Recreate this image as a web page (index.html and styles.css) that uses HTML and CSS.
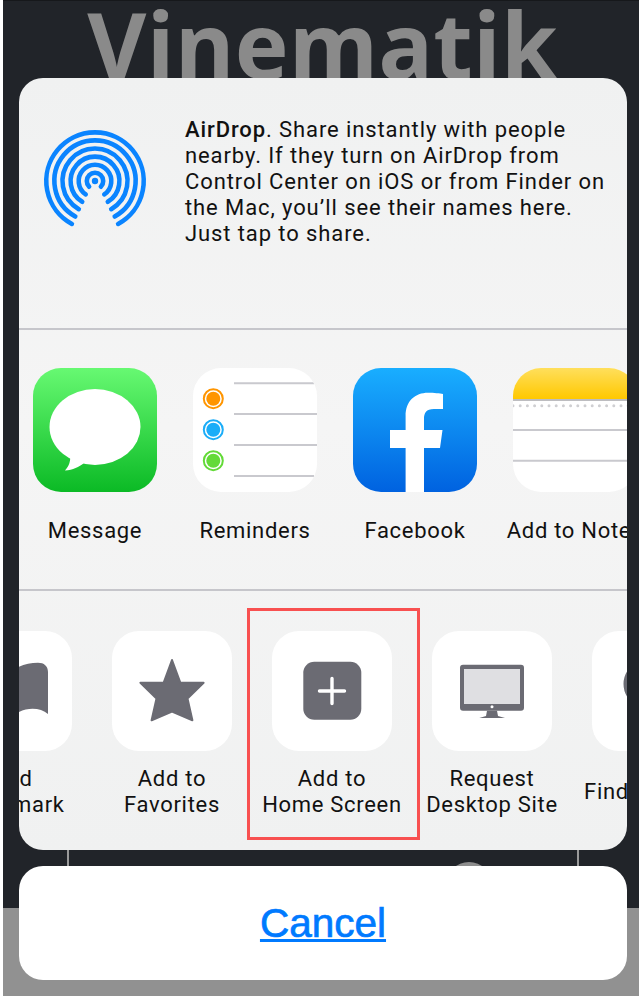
FILE: index.html
```html
<!DOCTYPE html>
<html lang="en">
<head>
    <meta charset="UTF-8">
    <meta name="viewport" content="width=device-width, initial-scale=1.0">
    <title>Share sheet</title>
    <link rel="stylesheet" href="styles.css">
</head>
<body>

<div class="page">
    <div class="backdrop">
        <h1 class="brand">Vinematik</h1>
        <div class="player">
            <span class="knob"></span>
        </div>
    </div>
    <div class="footer"></div>

    <div class="sheet">
        <section class="airdrop">
            <svg class="airdrop-icon" viewBox="-55 -55 110 110" width="110" height="110">
                <g fill="none" stroke="#0a84ff" stroke-width="4.6" stroke-linecap="round">
                    <path d="M-5.9 5.7A8.2 8.2 0 1 1 5.9 5.7"/>
                    <path d="M-9.3 13.4A16.3 16.3 0 1 1 9.3 13.4"/>
                    <path d="M-12.8 20.8A24.4 24.4 0 1 1 12.8 20.8"/>
                    <path d="M-16.2 28.2A32.5 32.5 0 1 1 16.2 28.2"/>
                    <path d="M-19.7 35.5A40.6 40.6 0 1 1 19.7 35.5"/>
                    <path d="M-23.1 42.9A48.7 48.7 0 1 1 23.1 42.9"/>
                </g>
                <circle r="3.2" fill="#0a84ff"/>
            </svg>
            <p class="airdrop-text"><b>AirDrop</b>. Share instantly with people<br>nearby. If they turn on AirDrop from<br>Control Center on iOS or from Finder on<br>the Mac, you’ll see their names here.<br>Just tap to share.</p>
        </section>

        <section class="row row-apps">
            <div class="item">
                <svg class="tile" viewBox="0 0 124 124">
                    <defs>
                        <linearGradient id="msgBg" x1="0" y1="0" x2="0" y2="1">
                            <stop offset="0" stop-color="#67f972"/>
                            <stop offset="1" stop-color="#0bba25"/>
                        </linearGradient>
                    </defs>
                    <rect width="124" height="124" fill="url(#msgBg)"/>
                    <ellipse cx="62" cy="59" rx="45.5" ry="38" fill="#fff"/>
                    <path d="M37 86C38 93 36 98 32 102.5C40 102 46 99 51 95Z" fill="#fff"/>
                </svg>
                <span class="label">Message</span>
            </div>
            <div class="item">
                <svg class="tile" viewBox="0 0 124 124">
                    <rect width="124" height="124" fill="#fff"/>
                    <g stroke="#c9c9ce" stroke-width="2">
                        <path d="M41 15.3H121"/>
                        <path d="M41 46H124"/>
                        <path d="M41 77H124"/>
                        <path d="M41 108H121"/>
                    </g>
                    <g fill="none" stroke-width="2">
                        <circle cx="20.3" cy="30.7" r="9.5" stroke="#ff9500"/>
                        <circle cx="20.3" cy="61.7" r="9.5" stroke="#1badf8"/>
                        <circle cx="20.3" cy="92.7" r="9.5" stroke="#63da38"/>
                    </g>
                    <circle cx="20.3" cy="30.7" r="7" fill="#ff9500"/>
                    <circle cx="20.3" cy="61.7" r="7" fill="#1badf8"/>
                    <circle cx="20.3" cy="92.7" r="7" fill="#63da38"/>
                </svg>
                <span class="label">Reminders</span>
            </div>
            <div class="item">
                <svg class="tile" viewBox="0 0 124 124">
                    <defs>
                        <linearGradient id="fbBg" x1="0" y1="0" x2="0" y2="1">
                            <stop offset="0" stop-color="#19aeff"/>
                            <stop offset="1" stop-color="#0062e0"/>
                        </linearGradient>
                    </defs>
                    <rect width="124" height="124" fill="url(#fbBg)"/>
                    <path d="M52.6 124V80H37V62H52.6V48C52.6 33 62 24.7 75 24.7C81 24.7 87 25.3 90 26V41H81C73 41 71 45 71 51V62H89.5L87 80H71V124Z" fill="#fff"/>
                </svg>
                <span class="label">Facebook</span>
            </div>
            <div class="item">
                <svg class="tile" viewBox="0 0 124 124">
                    <defs>
                        <linearGradient id="noteBg" x1="0" y1="0" x2="0" y2="1">
                            <stop offset="0" stop-color="#ffdf5c"/>
                            <stop offset="1" stop-color="#ffc800"/>
                        </linearGradient>
                    </defs>
                    <rect width="124" height="124" fill="#fff"/>
                    <rect width="124" height="31" fill="url(#noteBg)"/>
                    <rect y="31" width="124" height="2" fill="#bdbdc0"/>
                    <path d="M0 37.7H124" stroke="#cfcfd2" stroke-width="3" stroke-linecap="round" stroke-dasharray="0 7.2"/>
                    <g stroke="#c9c9ce" stroke-width="2">
                        <path d="M0 62H124"/>
                        <path d="M0 92.7H124"/>
                    </g>
                </svg>
                <span class="label">Add to Notes</span>
            </div>
        </section>

        <section class="row row-actions">
            <div class="item">
                <svg class="tile tile-small" viewBox="0 0 120 120">
                    <rect width="120" height="120" fill="#fff"/>
                    <path d="M60 40C66 35 76 31.7 86 31.7C92 31.7 96 35 96 41V83C87 75 70 76 60 86C50 76 33 75 24 83V41C24 35 28 31.7 34 31.7C44 31.7 54 35 60 40Z" fill="#6b6b73"/>
                </svg>
                <span class="label label-action">Add<br>Bookmark</span>
            </div>
            <div class="item">
                <svg class="tile tile-small" viewBox="0 0 120 120">
                    <rect width="120" height="120" fill="#fff"/>
                    <path d="M60 29L68.3 51.7H91.6L75.5 67.5L80.4 89.3L60 80.7L39.6 89.3L44.5 67.5L28.4 51.7H51.7Z" fill="#6b6b73" stroke="#6b6b73" stroke-width="2" stroke-linejoin="round"/>
                </svg>
                <span class="label label-action">Add to<br>Favorites</span>
            </div>
            <div class="item">
                <svg class="tile tile-small" viewBox="0 0 120 120">
                    <rect width="120" height="120" fill="#fff"/>
                    <rect x="31.3" y="30.7" width="58" height="58" rx="11" fill="#6b6b73"/>
                    <path d="M60 47.5V72.5M47.5 60H72.5" stroke="#fff" stroke-width="3.4" stroke-linecap="round"/>
                </svg>
                <span class="label label-action">Add to<br>Home Screen</span>
            </div>
            <div class="item">
                <svg class="tile tile-small" viewBox="0 0 120 120">
                    <rect width="120" height="120" fill="#fff"/>
                    <rect x="28" y="33.7" width="64" height="46" rx="3" fill="#6b6b73"/>
                    <rect x="32" y="38" width="56" height="35" fill="#dfdfe2"/>
                    <circle cx="60" cy="75.8" r="1.5" fill="#fff"/>
                    <path d="M55 79.7H65L66 85L73 87H47.3L54 85Z" fill="#6b6b73"/>
                </svg>
                <span class="label label-action">Request<br>Desktop Site</span>
            </div>
            <div class="item">
                <svg class="tile tile-small" viewBox="0 0 120 120">
                    <rect width="120" height="120" fill="#fff"/>
                    <circle cx="55" cy="53" r="21" fill="none" stroke="#6b6b73" stroke-width="5"/>
                    <path d="M70 69L88 88" stroke="#6b6b73" stroke-width="6" stroke-linecap="round"/>
                </svg>
                <span class="label label-action">Find on Page</span>
            </div>
        </section>

        <div class="highlight"></div>
    </div>

    <div class="cancel"><a href="#" class="cancel-link">Cancel</a></div>
</div>

</body>
</html>
```

FILE: styles.css
```css
body {
    margin: 0;
    font-family: Roboto, "Liberation Sans", sans-serif;
    background: #fff;
}

.page {
    position: relative;
    width: 639px;
    height: 996px;
    overflow: hidden;
    padding-left: 3px;
    box-sizing: border-box;
}

.backdrop {
    height: 908px;
    box-sizing: border-box;
    border-top: 1px solid #16181b;
    background: #212429;
    overflow: hidden;
}

.brand {
    margin: 0;
    height: 120px;
    padding-left: 3px;
    text-align: center;
    font-family: "Open Sans", sans-serif;
    font-size: 91px;
    line-height: 86px;
    letter-spacing: 0.2px;
    font-weight: 700;
    color: #8a8a8a;
}

.player {
    position: relative;
    height: 100%;
    margin: 700px 60px 0 64px;
    border-left: 2px solid #9a9a9a;
    border-right: 2px solid #9a9a9a;
}

.knob {
    position: absolute;
    left: 377px;
    top: 41px;
    width: 46px;
    height: 46px;
    border-radius: 50%;
    background: #8d8d8d;
}

.footer {
    height: 88px;
    background: #919191;
}

.sheet {
    position: absolute;
    left: 19px;
    top: 78px;
    width: 608px;
    height: 772px;
    border-radius: 24px;
    overflow: hidden;
    background: linear-gradient(#f0f1f1, #f5f5f5 45%, #f0f1f1);
}

.airdrop {
    display: flex;
    height: 252px;
    box-sizing: border-box;
    padding: 48px 0 0 21px;
    border-bottom: 2px solid #c6c6cb;
}

.airdrop-icon {
    flex: none;
}

.airdrop-text {
    margin: -9px 0 0 35px;
    font-size: 22px;
    line-height: 26px;
    letter-spacing: 0.9px;
    color: #111;
    white-space: nowrap;
}

.airdrop-text b {
    font-weight: 500;
}

.row {
    display: flex;
    overflow: hidden;
}

.row-apps {
    height: 261px;
    box-sizing: border-box;
    padding-top: 38px;
    margin-left: -4px;
    border-bottom: 2px solid #c6c6cb;
}

.row-actions {
    padding-top: 40px;
    margin-left: -87px;
}

.item {
    flex: none;
    width: 160px;
    display: flex;
    flex-direction: column;
    align-items: center;
}

.tile {
    width: 124px;
    height: 124px;
    border-radius: 28px;
    flex: none;
}

.tile-small {
    width: 120px;
    height: 120px;
    border-radius: 27px;
}

.label {
    margin-top: 26px;
    font-size: 22px;
    line-height: 26px;
    letter-spacing: 0.7px;
    color: #111;
    text-align: center;
    white-space: nowrap;
}

.label-action {
    margin-top: 15px;
    height: 52px;
    display: flex;
    align-items: center;
}

.highlight {
    position: absolute;
    left: 228px;
    top: 530px;
    width: 173px;
    height: 232px;
    box-sizing: border-box;
    border: 3px solid #f85050;
}

.cancel {
    position: absolute;
    left: 19px;
    top: 866px;
    width: 608px;
    height: 114px;
    border-radius: 24px;
    background: #fff;
    display: flex;
    align-items: center;
    justify-content: center;
}

.cancel-link {
    font-family: "Liberation Sans", sans-serif;
    font-size: 40.5px;
    color: #007aff;
    -webkit-text-stroke: 0.7px #007aff;
    text-decoration-thickness: 3px;
}
```
